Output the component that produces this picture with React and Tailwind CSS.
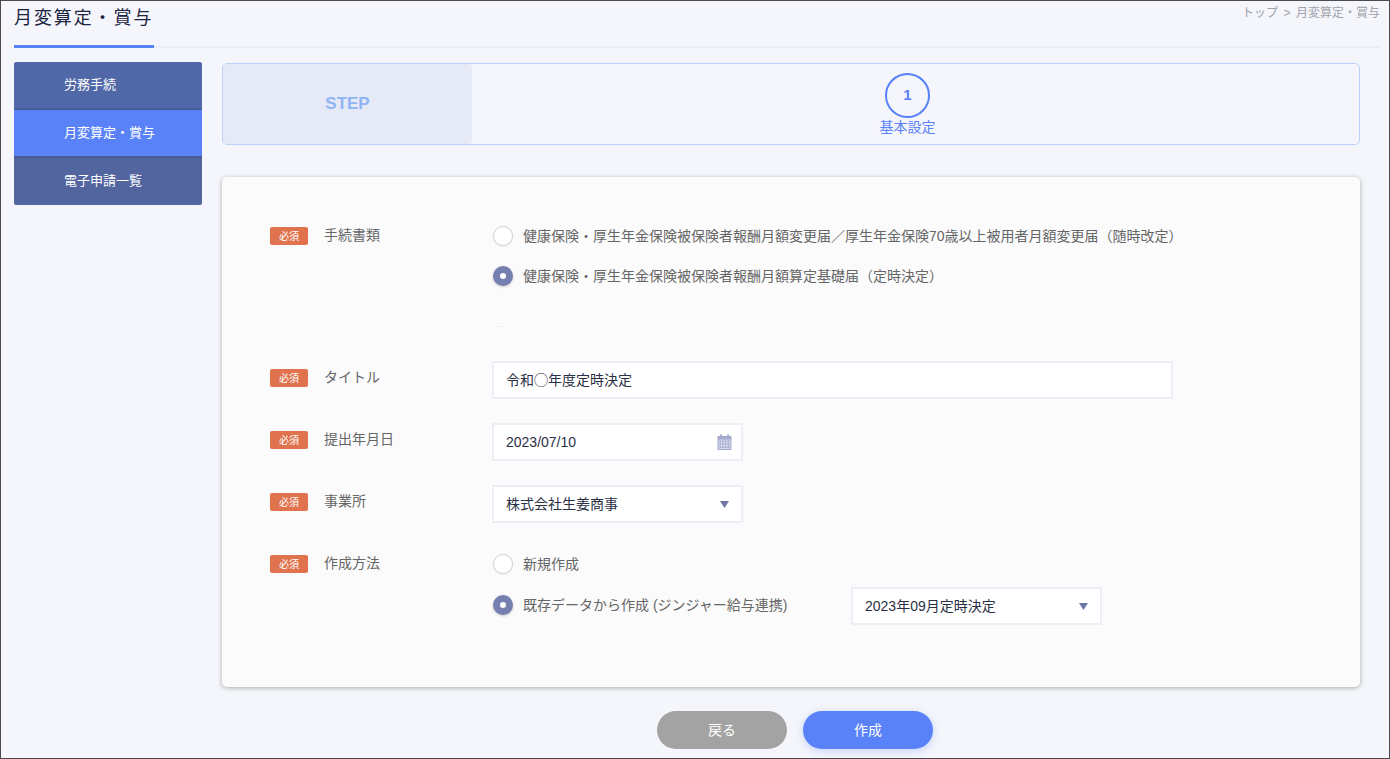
const font = "font-['Liberation_Sans','Noto_Sans_CJK_JP',sans-serif]";

const Badge = () => (
  <span className="flex h-[18px] w-[38px] shrink-0 items-center justify-center rounded-[2px] bg-[#e0724e] text-[10px] text-white">
    必須
  </span>
);

const Label = ({ top, children }) => (
  <div className={`flex w-[222px] shrink-0 items-center ${top}`}>
    <Badge />
    <span className="ml-4 pb-[2px] text-[14px] leading-[18px] text-[#666]">{children}</span>
  </div>
);

const Radio = ({ checked, children }) => (
  <div className="flex h-5 items-center pl-px">
    {checked ? (
      <span className="flex h-5 w-5 shrink-0 items-center justify-center rounded-full bg-[#7580b0] shadow-[0_1px_3px_rgba(0,0,0,0.2)]">
        <span className="h-[6px] w-[6px] rounded-full bg-white" />
      </span>
    ) : (
      <span className="h-5 w-5 shrink-0 rounded-full border border-[#cfcfcf] bg-white shadow-[0_1px_2px_rgba(0,0,0,0.06)]" />
    )}
    <span className="ml-[10px] whitespace-nowrap text-[14px] leading-5 text-[#666]">{children}</span>
  </div>
);

const Arrow = () => (
  <svg width="9" height="7" viewBox="0 0 9 7" className="shrink-0">
    <path d="M0 0h9L4.5 7z" fill="#6d77a6" />
  </svg>
);

const Calendar = () => (
  <svg width="15" height="16" viewBox="0 0 15 16" className="-mr-[3px] shrink-0">
    <rect x="0.5" y="2" width="14" height="14" rx="1" fill="#a3a9cf" />
    <rect x="3" y="0.5" width="2" height="3" fill="#a3a9cf" />
    <rect x="10" y="0.5" width="2" height="3" fill="#a3a9cf" />
    <path
      d="M2 6h11v8.5H2z M4.5 6v8.5 M7.2 6v8.5 M9.9 6v8.5 M2 8.8h11 M2 11.6h11"
      fill="none"
      stroke="#dfe1ef"
      strokeWidth="0.8"
    />
  </svg>
);

const Field = ({ width, children }) => (
  <div
    className={`flex h-[38px] items-center justify-between border-2 border-[#eeeff6] bg-white pl-3 pr-3 text-[14px] text-[#2a2f45] ${width}`}
  >
    {children}
  </div>
);

export default function App() {
  return (
    <div className={`h-[759px] w-[1390px] overflow-hidden border border-[#4b4b4f] bg-[#f4f6fb] ${font}`}>
      <div className="ml-[13px] mr-[9px] flex h-[47px] items-start justify-between border-b-2 border-[#ebedf6]">
        <div className="h-[47px] w-[140px] shrink-0 border-b-[3px] border-[#5a82f8]">
          <h1 className="whitespace-nowrap pt-[5px] text-[18px] leading-6 tracking-[1.9px] text-[#1d2440]">
            月変算定・賞与
          </h1>
        </div>
        <div className="whitespace-nowrap pt-[4px] text-[12px] leading-4 text-[#a0a3ad]">
          トップ<span className="mx-[5.5px]">&gt;</span>月変算定・賞与
        </div>
      </div>

      <div className="mt-[14px] flex items-start pl-[13px]">
        <nav className="w-[188px] shrink-0 overflow-hidden rounded-[2px] text-[13px] text-white">
          <div className="flex h-[48px] items-center border-b-2 border-[#475c98] bg-[#5068a8] pl-[50px]">労務手続</div>
          <div className="flex h-[48px] items-center border-b-2 border-[#4a5a92] bg-[#5a82f8] pl-[50px]">月変算定・賞与</div>
          <div className="flex h-[47px] items-center bg-[#53659f] pb-[2px] pl-[50px]">電子申請一覧</div>
        </nav>

        <main className="ml-5 w-[1138px] shrink-0">
          <div className="mt-px flex h-[82px] rounded-[5px] border border-[#bcd3f7]">
            <div className="flex w-[249px] items-center justify-center rounded-[4px] bg-[#e6e9f6] text-[17px] font-bold text-[#8fb4f5]">
              STEP
            </div>
            <div className="flex flex-1 flex-col items-center pr-4 pt-[9px]">
              <div className="flex h-[45px] w-[45px] items-center justify-center rounded-full border-2 border-[#5a82f8] text-[15px] font-bold text-[#5a82f8]">
                1
              </div>
              <div className="text-[14px] leading-[18px] text-[#5a82f8]">基本設定</div>
            </div>
          </div>

          <div className="mt-8 h-[510px] rounded-[5px] bg-[#fbfbfc] pl-12 pt-[40px] shadow-[0_1px_5px_rgba(0,0,0,0.3)]">
            <div className="flex items-start">
              <Label top="pt-[9px]">手続書類</Label>
              <div className="flex flex-col gap-[20px] pt-[9px]">
                <Radio>健康保険・厚生年金保険被保険者報酬月額変更届／厚生年金保険70歳以上被用者月額変更届（随時改定）</Radio>
                <Radio checked>健康保険・厚生年金保険被保険者報酬月額算定基礎届（定時決定）</Radio>
                <div className="ml-[3px] mt-[20px] h-px w-[10px] bg-[#f3f3f5]" />
              </div>
            </div>

            <div className="mt-[34px] flex items-start">
              <Label top="pt-[7px]">タイトル</Label>
              <Field width="w-[681px]">令和◯年度定時決定</Field>
            </div>

            <div className="mt-6 flex items-start">
              <Label top="pt-[7px]">提出年月日</Label>
              <Field width="w-[251px]">
                2023/07/10
                <Calendar />
              </Field>
            </div>

            <div className="mt-6 flex items-start">
              <Label top="pt-[7px]">事業所</Label>
              <Field width="w-[251px]">
                株式会社生姜商事
                <Arrow />
              </Field>
            </div>

            <div className="mt-6 flex items-start">
              <Label top="pt-[7px]">作成方法</Label>
              <div className="flex flex-col gap-[13px] pt-[7px]">
                <Radio>新規作成</Radio>
                <div className="flex items-center">
                  <div className="w-[359px] shrink-0 pb-[2px]">
                    <Radio checked>既存データから作成 (ジンジャー給与連携)</Radio>
                  </div>
                  <Field width="w-[251px]">
                    2023年09月定時決定
                    <Arrow />
                  </Field>
                </div>
              </div>
            </div>
          </div>

          <div className="mt-6 flex justify-center gap-4 pl-2">
            <button className="h-[38px] w-[130px] rounded-full bg-[#a3a3a3] text-[14px] text-white">戻る</button>
            <button className="h-[38px] w-[130px] rounded-full bg-[#5a82f8] text-[14px] text-white shadow-[0_2px_8px_rgba(90,130,248,0.3)]">
              作成
            </button>
          </div>
        </main>
      </div>
    </div>
  );
}
